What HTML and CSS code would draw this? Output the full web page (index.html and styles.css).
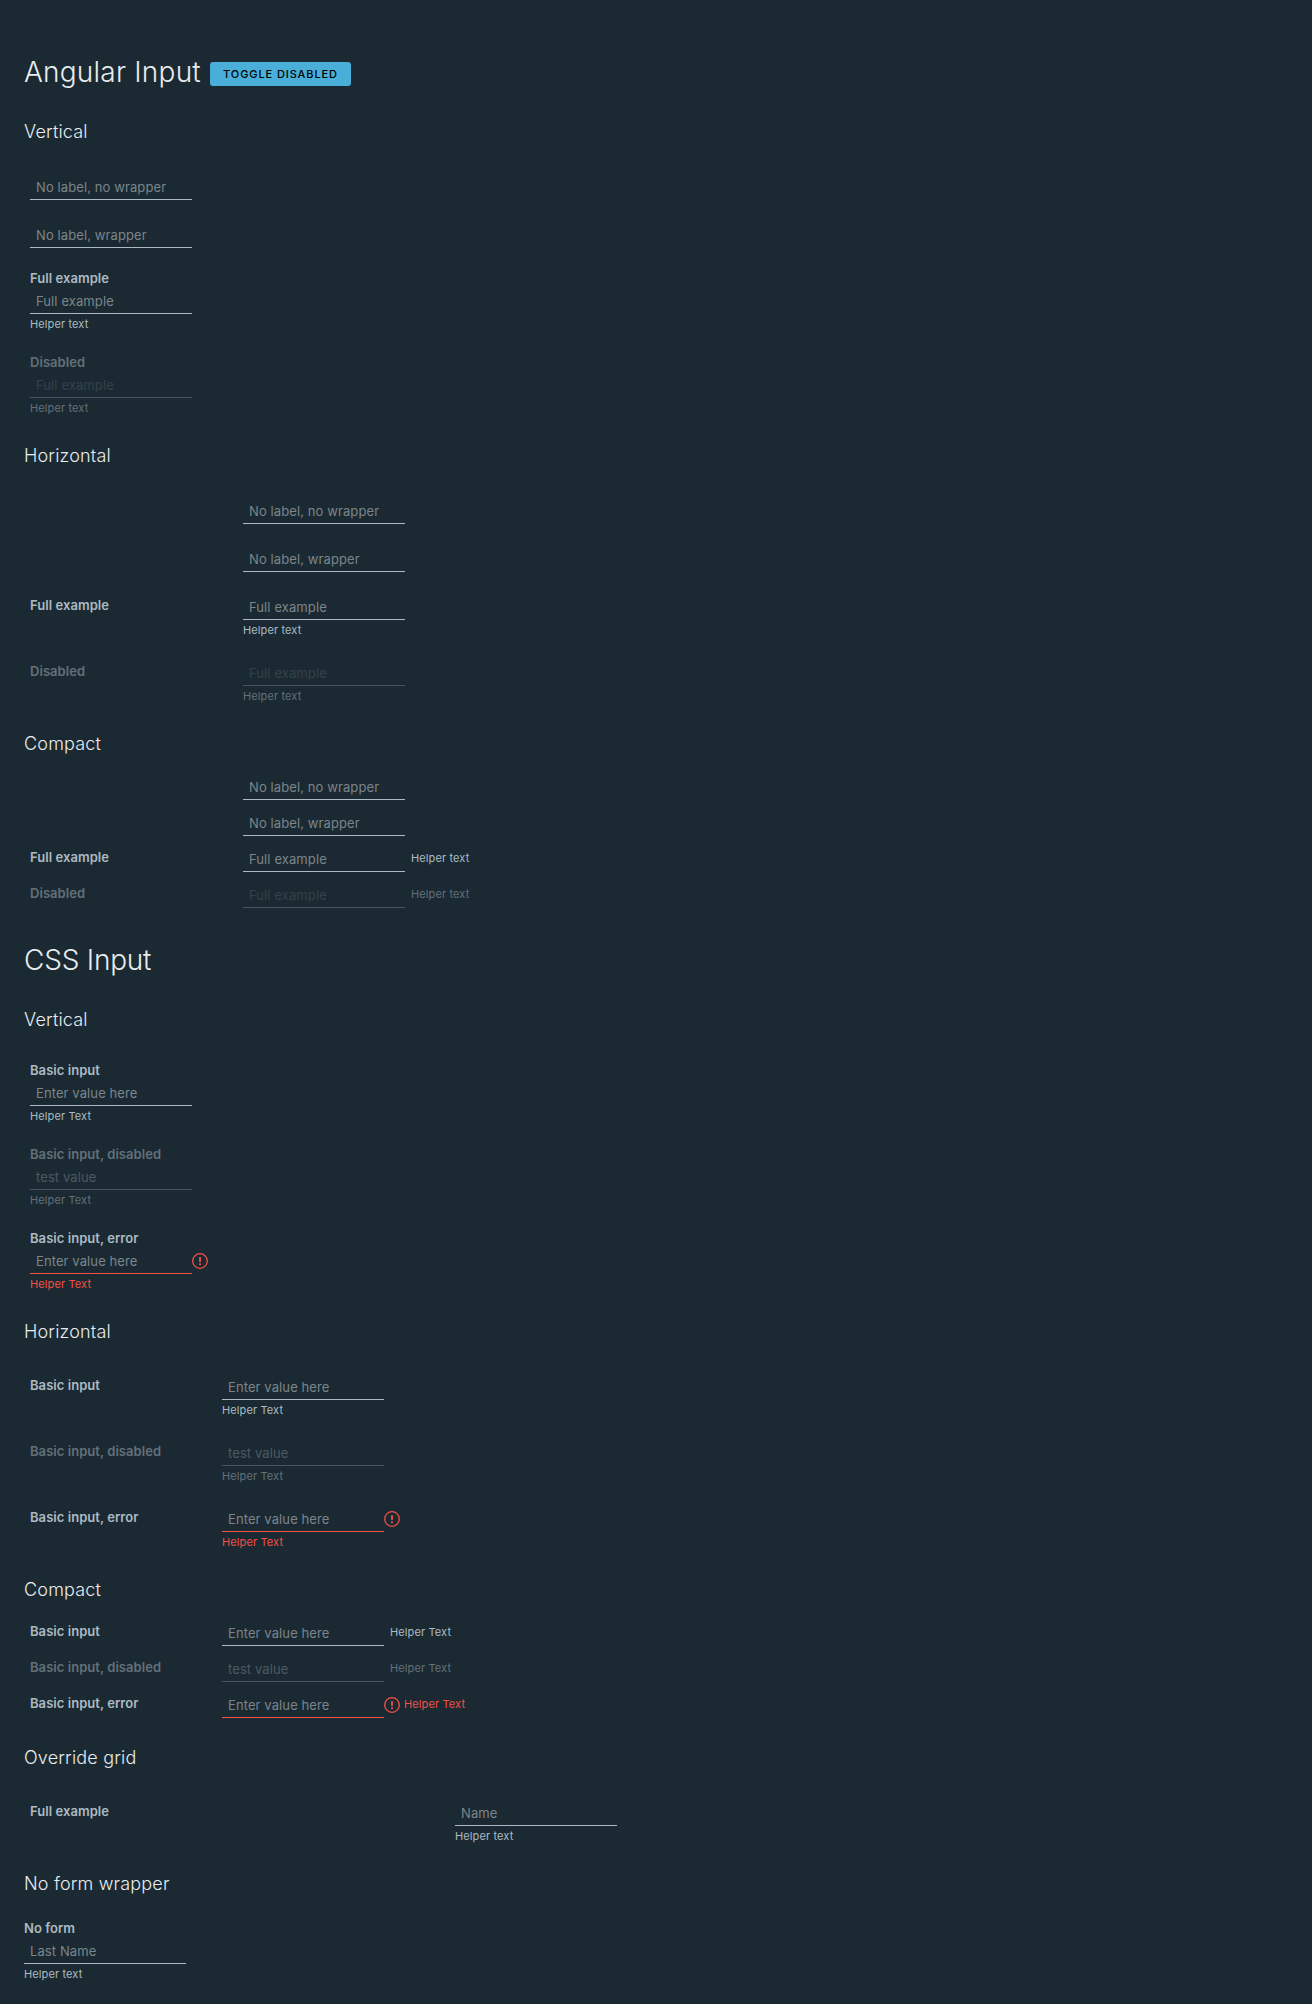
FILE: index.html
```html
<!DOCTYPE html>
<html lang="en">
<head>
<meta charset="utf-8">
<title>Input</title>
<link rel="stylesheet" href="styles.css">
</head>
<body>
<svg class="sprite" aria-hidden="true">
  <symbol id="error" viewBox="0 0 16 16">
    <circle cx="8" cy="8" r="7.3" fill="none" stroke="currentColor" stroke-width="1.3"/>
    <rect x="7.1" y="4" width="1.8" height="5.2" rx=".6" fill="currentColor"/>
    <circle cx="8" cy="11.3" r="1" fill="currentColor"/>
  </symbol>
</svg>
<main class="page">
  <header class="title">
    <h1>Angular Input</h1>
    <button class="btn" type="button">Toggle Disabled</button>
  </header>

  <section class="section first">
    <h3>Vertical</h3>
    <form class="form vertical">
      <div class="field"><div class="control"><input placeholder="No label, no wrapper"></div></div>
      <div class="field"><div class="control"><input placeholder="No label, wrapper"></div></div>
      <div class="field">
        <label>Full example</label>
        <div class="control"><input placeholder="Full example"></div>
        <span class="helper">Helper text</span>
      </div>
      <div class="field disabled">
        <label>Disabled</label>
        <div class="control"><input placeholder="Full example" disabled></div>
        <span class="helper">Helper text</span>
      </div>
    </form>
  </section>

  <section class="section">
    <h3>Horizontal</h3>
    <form class="form horizontal wide">
      <div class="field"><div class="control"><input placeholder="No label, no wrapper"></div></div>
      <div class="field"><div class="control"><input placeholder="No label, wrapper"></div></div>
      <div class="field">
        <label>Full example</label>
        <div class="control"><input placeholder="Full example"></div>
        <span class="helper">Helper text</span>
      </div>
      <div class="field disabled">
        <label>Disabled</label>
        <div class="control"><input placeholder="Full example" disabled></div>
        <span class="helper">Helper text</span>
      </div>
    </form>
  </section>

  <section class="section">
    <h3>Compact</h3>
    <form class="form compact wide">
      <div class="field"><div class="control"><input placeholder="No label, no wrapper"></div></div>
      <div class="field"><div class="control"><input placeholder="No label, wrapper"></div></div>
      <div class="field">
        <label>Full example</label>
        <div class="control"><input placeholder="Full example"></div>
        <span class="helper">Helper text</span>
      </div>
      <div class="field disabled">
        <label>Disabled</label>
        <div class="control"><input placeholder="Full example" disabled></div>
        <span class="helper">Helper text</span>
      </div>
    </form>
  </section>

  <header class="title second">
    <h1>CSS Input</h1>
  </header>

  <section class="section first">
    <h3>Vertical</h3>
    <form class="form vertical">
      <div class="field">
        <label>Basic input</label>
        <div class="control"><input placeholder="Enter value here"></div>
        <span class="helper">Helper Text</span>
      </div>
      <div class="field disabled">
        <label>Basic input, disabled</label>
        <div class="control"><input value="test value" disabled></div>
        <span class="helper">Helper Text</span>
      </div>
      <div class="field error">
        <label>Basic input, error</label>
        <div class="control"><input placeholder="Enter value here"><svg class="icon"><use href="#error"/></svg></div>
        <span class="helper">Helper Text</span>
      </div>
    </form>
  </section>

  <section class="section">
    <h3>Horizontal</h3>
    <form class="form horizontal">
      <div class="field">
        <label>Basic input</label>
        <div class="control"><input placeholder="Enter value here"></div>
        <span class="helper">Helper Text</span>
      </div>
      <div class="field disabled">
        <label>Basic input, disabled</label>
        <div class="control"><input value="test value" disabled></div>
        <span class="helper">Helper Text</span>
      </div>
      <div class="field error">
        <label>Basic input, error</label>
        <div class="control"><input placeholder="Enter value here"><svg class="icon"><use href="#error"/></svg></div>
        <span class="helper">Helper Text</span>
      </div>
    </form>
  </section>

  <section class="section">
    <h3>Compact</h3>
    <form class="form compact">
      <div class="field">
        <label>Basic input</label>
        <div class="control"><input placeholder="Enter value here"></div>
        <span class="helper">Helper Text</span>
      </div>
      <div class="field disabled">
        <label>Basic input, disabled</label>
        <div class="control"><input value="test value" disabled></div>
        <span class="helper">Helper Text</span>
      </div>
      <div class="field error">
        <label>Basic input, error</label>
        <div class="control"><input placeholder="Enter value here"><svg class="icon"><use href="#error"/></svg></div>
        <span class="helper">Helper Text</span>
      </div>
    </form>
  </section>

  <section class="section">
    <h3>Override grid</h3>
    <form class="form horizontal override">
      <div class="field">
        <label>Full example</label>
        <div class="control"><input placeholder="Name"></div>
        <span class="helper">Helper text</span>
      </div>
    </form>
  </section>

  <section class="section">
    <h3>No form wrapper</h3>
    <div class="vertical bare">
      <div class="field">
        <label>No form</label>
        <div class="control"><input placeholder="Last Name"></div>
        <span class="helper">Helper text</span>
      </div>
    </div>
  </section>
</main>
</body>
</html>
```
FILE: styles.css
```css
* { box-sizing: border-box; }

body {
  margin: 0;
  background: #1b2a32;
  color: #acbac3;
  font-family: Inter, "Liberation Sans", sans-serif;
  font-size: 13px;
}

.sprite { display: none; }

.page {
  min-height: 2004px;
  padding: 56px 24px 0;
}

.title {
  display: flex;
  align-items: flex-start;
  height: 30px;
}

.title.second { margin-top: 36px; }

h1, h3 {
  margin: 0;
  color: #e9ecef;
  font-weight: 270;
}

h1 {
  font-size: 28px;
  line-height: 32px;
  letter-spacing: .22px;
  white-space: nowrap;
}

.title:not(.second) h1 { width: 186px; }
.title.second h1 { letter-spacing: -.22px; }

h3 {
  height: 24px;
  margin-bottom: 33px;
  font-size: 18px;
  line-height: 26px;
  letter-spacing: .18px;
}

.btn {
  width: 141px;
  height: 24px;
  margin-top: 6px;
  padding: 0;
  border: 0;
  border-radius: 3px;
  background: #49afd9;
  color: #000;
  font: 500 11px/24px Inter, sans-serif;
  letter-spacing: .9px;
  text-transform: uppercase;
}

.section { padding-top: 27px; }
.section.first { padding-top: 33px; }

.form {
  display: flex;
  flex-direction: column;
  gap: 24px;
  padding-left: 6px;
}

label {
  font-weight: 600;
  line-height: 18px;
  letter-spacing: .05px;
}

.control {
  display: flex;
  align-items: flex-start;
  height: 24px;
}

input {
  width: 162px;
  height: 24px;
  padding: 0 6px 1px;
  border: 0;
  border-bottom: 1px solid #acbac3;
  border-radius: 0;
  outline: 0;
  background: none;
  color: #e9ecef;
  font: 400 13px Inter, sans-serif;
  letter-spacing: .1px;
}

input::placeholder {
  color: #7b858b;
  opacity: 1;
}

.helper {
  height: 18px;
  padding-top: 2px;
  font-size: 11px;
  line-height: 16px;
  letter-spacing: .12px;
}

.icon {
  width: 16px;
  height: 16px;
  margin-top: 3px;
  color: #f54f47;
}

/* Stacked fields */
.vertical .field {
  display: flex;
  flex-direction: column;
}

.vertical label {
  height: 18px;
  line-height: 13px;
}

.bare { margin-top: -6px; }

/* Label column beside the control */
.horizontal .field,
.compact .field {
  display: grid;
  grid-template-columns: 192px auto 1fr;
}

.wide .field { grid-template-columns: 213px auto 1fr; }
.override .field { grid-template-columns: 425px auto 1fr; }

.horizontal label,
.compact label { grid-column: 1; }

.horizontal .control,
.compact .control { grid-column: 2; }

.horizontal .helper { grid-column: 2; }

.compact { gap: 12px; }

.compact .helper {
  grid-column: 3;
  height: 24px;
  padding: 0 0 0 6px;
  line-height: 20px;
}

.section:has(.compact) h3 { margin-bottom: 21px; }

/* States */
.disabled label { color: #637079; }
.disabled .helper { color: #637079; }

.disabled input {
  border-bottom-color: #465660;
  color: #4b5962;
}

.disabled input::placeholder { color: #344149; }

.error input { border-bottom-color: #f54f47; }
.error .helper { color: #f54f47; }
.compact .error .helper { padding-left: 4px; }
```
